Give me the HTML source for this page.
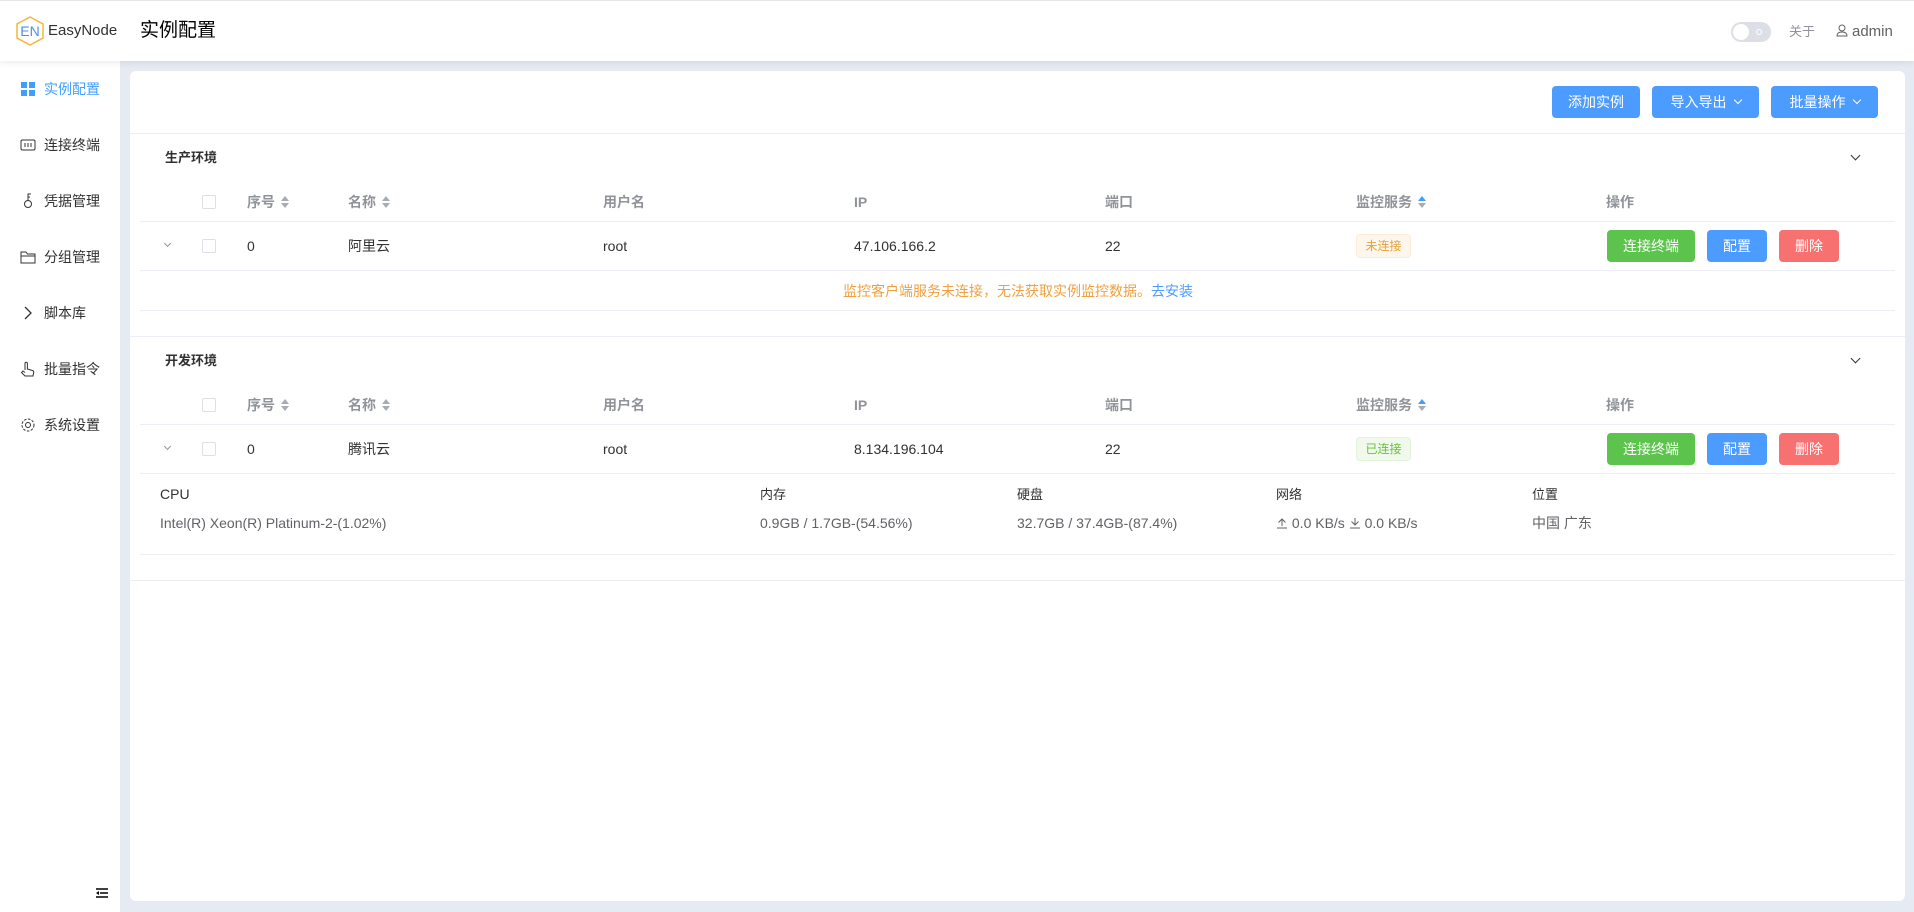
<!DOCTYPE html>
<html><head><meta charset="utf-8"><style>
*{box-sizing:border-box;margin:0;padding:0}
body{width:1914px;height:912px;background:#e6eaf2;font-family:"Liberation Sans","Noto Sans CJK SC",sans-serif;position:relative;overflow:hidden;color:#303133;line-height:20px}
.a{position:absolute;white-space:nowrap}
.hdr{position:absolute;left:0;top:0;width:1914px;height:61px;background:#fff;box-shadow:0 2px 6px rgba(0,0,0,.08);border-top:1px solid #e6e6e6;z-index:2}
.side{position:absolute;left:0;top:61px;width:120px;height:851px;background:#fff}
.card{position:absolute;left:130px;top:71px;right:9px;height:830px;background:#fff;border-radius:6px}
.mi{position:absolute;left:20px;font-size:14px;color:#303133;display:flex;align-items:center;gap:8px}
.mi svg{width:16px;height:16px}
.btn{position:absolute;height:32px;border-radius:4px;color:#fff;font-size:14px;display:flex;align-items:center;justify-content:center;gap:8px}
.hl{position:absolute;height:1px;background:#ebeef5}
.th{position:absolute;font-size:14px;color:#909399;font-weight:bold;white-space:nowrap}
.td{position:absolute;font-size:14px;color:#303133;white-space:nowrap}
.cb{position:absolute;width:14px;height:14px;border:1px solid #dcdfe6;border-radius:2px;background:#fff}
.sort{display:inline-block;vertical-align:middle;margin-left:6px;width:8px;height:14px;position:relative;top:-1px}
.sort:before{content:"";position:absolute;left:0;top:1px;border:4px solid transparent;border-bottom:5px solid #a8abb2;border-top:0}
.sort:after{content:"";position:absolute;left:0;top:8px;border:4px solid transparent;border-top:5px solid #a8abb2;border-bottom:0}
.sort.b:before{border-bottom-color:#409eff}
.tag{position:absolute;height:24px;border-radius:4px;font-size:12px;display:flex;align-items:center;justify-content:center;width:55px}
.sm{position:absolute;height:32px;border-radius:4px;color:#fff;font-size:14px;display:flex;align-items:center;justify-content:center}
.chev{position:absolute;width:7px;height:7px;border-right:1px solid #333;border-bottom:1px solid #333;transform:rotate(45deg)}
</style></head><body>
<div class="hdr">
 <svg class="a" style="left:16px;top:15px" width="28" height="30" viewBox="0 0 28 30"><polygon points="14,1 27,8 27,22 14,29 1,22 1,8" fill="none" stroke="#f4b73f" stroke-width="1.5"/><text x="14" y="20" text-anchor="middle" font-family="Liberation Sans" font-size="14" fill="#4a90e2">EN</text></svg>
 <div class="a" style="left:48px;top:20px;font-size:15px;color:#303133">EasyNode</div>
 <div class="a" style="left:140px;top:18px;font-size:19px;line-height:24px;color:#000">实例配置</div>
 <div class="a" style="left:1731px;top:21px;width:40px;height:20px;border-radius:10px;background:#dcdfe6"><div style="position:absolute;left:2px;top:2px;width:16px;height:16px;border-radius:50%;background:#fff"></div><div style="position:absolute;left:25px;top:7px;width:6px;height:6px;border-radius:50%;border:1px solid #fff"></div></div>
 <div class="a" style="left:1789px;top:21px;font-size:13px;color:#909399">关于</div>
 <svg class="a" style="left:1836px;top:23px" width="12" height="13" viewBox="0 0 12 13"><circle cx="6" cy="4" r="3" fill="none" stroke="#606266"/><path d="M1 12 Q1 8 6 8 Q11 8 11 12 Z" fill="none" stroke="#606266"/></svg>
 <div class="a" style="left:1852px;top:21px;font-size:15px;color:#606266">admin</div>
</div>
<div class="side">
 <div class="mi" style="top:18px;color:#409eff"><svg viewBox="0 0 16 16"><rect x="1" y="1" width="6" height="6" fill="#409eff"/><rect x="9" y="1" width="6" height="6" fill="#409eff"/><rect x="1" y="9" width="6" height="6" fill="#409eff"/><rect x="9" y="9" width="6" height="6" fill="#409eff"/></svg>实例配置</div>
 <div class="mi" style="top:74px"><svg viewBox="0 0 16 16"><rect x="1" y="3" width="14" height="10" rx="1.5" fill="none" stroke="#333"/><path d="M5 6v4M8 6v4M11 6v4" stroke="#333"/></svg>连接终端</div>
 <div class="mi" style="top:130px"><svg viewBox="0 0 16 16"><circle cx="8" cy="11" r="3.5" fill="none" stroke="#333"/><path d="M8 7.5V1h3M8 4h2" stroke="#333" fill="none"/></svg>凭据管理</div>
 <div class="mi" style="top:186px"><svg viewBox="0 0 16 16"><path d="M1 3h5l1.5 2H15v9H1z" fill="none" stroke="#333"/><path d="M1 7h14" stroke="#333"/></svg>分组管理</div>
 <div class="mi" style="top:242px"><svg viewBox="0 0 16 16"><path d="M5 2l6 6-6 6" fill="none" stroke="#333" stroke-width="1.3"/></svg>脚本库</div>
 <div class="mi" style="top:298px"><svg viewBox="0 0 16 16"><path d="M5 9V2.5a1.2 1.2 0 0 1 2.4 0V8l5 1.5c1 .3 1.5 1 1.3 2L13 15H5L1.5 11.5 3 10l2 1.5" fill="none" stroke="#333"/></svg>批量指令</div>
 <div class="mi" style="top:354px"><svg viewBox="0 0 16 16"><circle cx="8" cy="8" r="2.5" fill="none" stroke="#333"/><circle cx="8" cy="8" r="6" fill="none" stroke="#333" stroke-dasharray="2.5 1.5"/></svg>系统设置</div>
 <svg class="a" style="left:96px;top:827px" width="12" height="10" viewBox="0 0 12 10"><path d="M0 1h12M4 5h8M0 9h12" stroke="#000" stroke-width="1.5"/><path d="M0 5l3-2v4z" fill="#000"/></svg>
</div>
<div class="card"></div>
<div class="btn" style="left:1552px;top:86px;width:88px;background:#4c9bff">添加实例</div>
<div class="btn" style="left:1652px;top:86px;width:107px;background:#4c9bff">导入导出 <span style="display:inline-block;width:6px;height:6px;border-right:1px solid #fff;border-bottom:1px solid #fff;transform:rotate(45deg);margin-top:-4px"></span></div>
<div class="btn" style="left:1771px;top:86px;width:107px;background:#4c9bff">批量操作 <span style="display:inline-block;width:6px;height:6px;border-right:1px solid #fff;border-bottom:1px solid #fff;transform:rotate(45deg);margin-top:-4px"></span></div>
<div class="hl" style="left:130px;width:1775px;top:133px"></div>

<div class="a" style="left:165px;top:148px;font-size:13px;font-weight:bold;color:#303133">生产环境</div>
<div class="chev" style="left:1852px;top:152px"></div>
<div class="cb" style="left:202px;top:195px"></div>
<div class="th" style="left:247px;top:192px">序号<span class="sort"></span></div>
<div class="th" style="left:348px;top:192px">名称<span class="sort"></span></div>
<div class="th" style="left:603px;top:192px">用户名</div>
<div class="th" style="left:854px;top:192px">IP</div>
<div class="th" style="left:1105px;top:192px">端口</div>
<div class="th" style="left:1356px;top:192px">监控服务<span class="sort b"></span></div>
<div class="th" style="left:1606px;top:192px">操作</div>
<div class="hl" style="left:140px;width:1755px;top:221px"></div>
<div class="chev" style="left:165px;top:241px;width:5px;height:5px;border-color:#909399"></div>
<div class="cb" style="left:202px;top:239px"></div>
<div class="td" style="left:247px;top:236px">0</div>
<div class="td" style="left:348px;top:236px">阿里云</div>
<div class="td" style="left:603px;top:236px">root</div>
<div class="td" style="left:854px;top:236px">47.106.166.2</div>
<div class="td" style="left:1105px;top:236px">22</div>
<div class="tag" style="left:1356px;top:234px;background:#fdf6ec;border:1px solid #faecd8;color:#e6a23c">未连接</div>
<div class="sm" style="left:1607px;top:230px;width:88px;background:#5cc44d">连接终端</div>
<div class="sm" style="left:1707px;top:230px;width:60px;background:#4c9bff">配置</div>
<div class="sm" style="left:1779px;top:230px;width:60px;background:#f87171">删除</div>
<div class="hl" style="left:140px;width:1755px;top:270px"></div>
<div class="a" style="left:843px;top:281px;font-size:14px;color:#f0a040">监控客户端服务未连接，无法获取实例监控数据。<span style="color:#4c9bff">去安装</span></div>
<div class="hl" style="left:140px;width:1755px;top:310px"></div>
<div class="hl" style="left:130px;width:1775px;top:336px"></div>

<div class="a" style="left:165px;top:351px;font-size:13px;font-weight:bold;color:#303133">开发环境</div>
<div class="chev" style="left:1852px;top:355px"></div>
<div class="cb" style="left:202px;top:398px"></div>
<div class="th" style="left:247px;top:395px">序号<span class="sort"></span></div>
<div class="th" style="left:348px;top:395px">名称<span class="sort"></span></div>
<div class="th" style="left:603px;top:395px">用户名</div>
<div class="th" style="left:854px;top:395px">IP</div>
<div class="th" style="left:1105px;top:395px">端口</div>
<div class="th" style="left:1356px;top:395px">监控服务<span class="sort b"></span></div>
<div class="th" style="left:1606px;top:395px">操作</div>
<div class="hl" style="left:140px;width:1755px;top:424px"></div>
<div class="chev" style="left:165px;top:444px;width:5px;height:5px;border-color:#909399"></div>
<div class="cb" style="left:202px;top:442px"></div>
<div class="td" style="left:247px;top:439px">0</div>
<div class="td" style="left:348px;top:439px">腾讯云</div>
<div class="td" style="left:603px;top:439px">root</div>
<div class="td" style="left:854px;top:439px">8.134.196.104</div>
<div class="td" style="left:1105px;top:439px">22</div>
<div class="tag" style="left:1356px;top:437px;background:#f0f9eb;border:1px solid #e1f3d8;color:#67c23a">已连接</div>
<div class="sm" style="left:1607px;top:433px;width:88px;background:#5cc44d">连接终端</div>
<div class="sm" style="left:1707px;top:433px;width:60px;background:#4c9bff">配置</div>
<div class="sm" style="left:1779px;top:433px;width:60px;background:#f87171">删除</div>
<div class="hl" style="left:140px;width:1755px;top:473px"></div>
<div class="td" style="left:160px;top:484px">CPU</div>
<div class="td" style="left:160px;top:513px;color:#606266">Intel(R) Xeon(R) Platinum-2-(1.02%)</div>
<div class="td" style="left:760px;top:485px;font-size:13px">内存</div>
<div class="td" style="left:760px;top:513px;color:#606266">0.9GB / 1.7GB-(54.56%)</div>
<div class="td" style="left:1017px;top:485px;font-size:13px">硬盘</div>
<div class="td" style="left:1017px;top:513px;color:#606266">32.7GB / 37.4GB-(87.4%)</div>
<div class="td" style="left:1276px;top:485px;font-size:13px">网络</div>
<div class="td" style="left:1276px;top:513px;color:#606266"><svg width="12" height="12" viewBox="0 0 12 12" style="vertical-align:-1px"><path d="M6 9V2M2.5 5.5L6 2l3.5 3.5M1 11h10" stroke="#606266" fill="none"/></svg> 0.0 KB/s <svg width="12" height="12" viewBox="0 0 12 12" style="vertical-align:-1px"><path d="M6 1v7M2.5 4.5L6 8l3.5-3.5M1 11h10" stroke="#606266" fill="none"/></svg> 0.0 KB/s</div>
<div class="td" style="left:1532px;top:485px;font-size:13px">位置</div>
<div class="td" style="left:1532px;top:513px;color:#606266">中国 广东</div>
<div class="hl" style="left:140px;width:1755px;top:554px"></div>
<div class="hl" style="left:130px;width:1775px;top:580px"></div>
</body></html>
